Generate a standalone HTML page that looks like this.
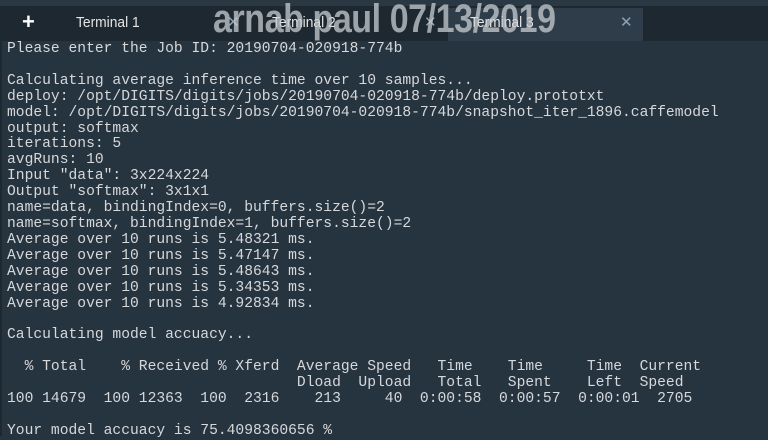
<!DOCTYPE html>
<html><head><style>
html,body{margin:0;padding:0;width:768px;height:436px;overflow:hidden;background:#263440;}
.top{position:absolute;left:0;top:0;width:768px;height:6px;background:#2a3843;}
.bar{position:absolute;left:0;top:6px;width:768px;height:35px;background:#1d2831;}
.act{position:absolute;left:448px;top:8px;width:195px;height:33px;background:#2e3d49;}
.t{position:absolute;top:14px;font:15px "Liberation Sans",sans-serif;color:#e6e6e6;transform:scaleX(0.92);transform-origin:0 0;white-space:nowrap;}
.x{position:absolute;top:13px;font:15px "Liberation Sans",sans-serif;color:#8fa3b3;}
.plus{position:absolute;left:22px;top:9px;font:bold 22px "Liberation Sans",sans-serif;color:#fff;}
.wm{position:absolute;left:213px;top:-3px;font:bold 40px "Liberation Sans",sans-serif;color:rgba(200,205,210,0.75);letter-spacing:-0.5px;white-space:nowrap;transform:scaleX(0.85);transform-origin:0 0;}
pre{position:absolute;left:7px;top:42px;margin:0;font:14.65px "Liberation Mono",monospace;line-height:15.9px;color:#d6d8da;}
.lb{position:absolute;left:0;top:41px;width:2px;height:395px;background:#1d2831;}
</style></head><body>
<div class="top"></div><div class="bar"></div><div class="act"></div>
<div class="plus">+</div>
<div class="t" style="left:76px">Terminal 1</div><div class="x" style="left:227px">✕</div>
<div class="t" style="left:272px">Terminal 2</div><div class="x" style="left:424px">✕</div>
<div class="t" style="left:470px">Terminal 3</div><div class="x" style="left:620px">✕</div>
<div class="wm">arnab paul 07/13/2019</div>
<div class="lb"></div>
<pre>Please enter the Job ID: 20190704-020918-774b

Calculating average inference time over 10 samples...
deploy: /opt/DIGITS/digits/jobs/20190704-020918-774b/deploy.prototxt
model: /opt/DIGITS/digits/jobs/20190704-020918-774b/snapshot_iter_1896.caffemodel
output: softmax
iterations: 5
avgRuns: 10
Input "data": 3x224x224
Output "softmax": 3x1x1
name=data, bindingIndex=0, buffers.size()=2
name=softmax, bindingIndex=1, buffers.size()=2
Average over 10 runs is 5.48321 ms.
Average over 10 runs is 5.47147 ms.
Average over 10 runs is 5.48643 ms.
Average over 10 runs is 5.34353 ms.
Average over 10 runs is 4.92834 ms.

Calculating model accuacy...

  % Total    % Received % Xferd  Average Speed   Time    Time     Time  Current
                                 Dload  Upload   Total   Spent    Left  Speed
100 14679  100 12363  100  2316    213     40  0:00:58  0:00:57  0:00:01  2705

Your model accuacy is 75.4098360656 %</pre>
</body></html>
